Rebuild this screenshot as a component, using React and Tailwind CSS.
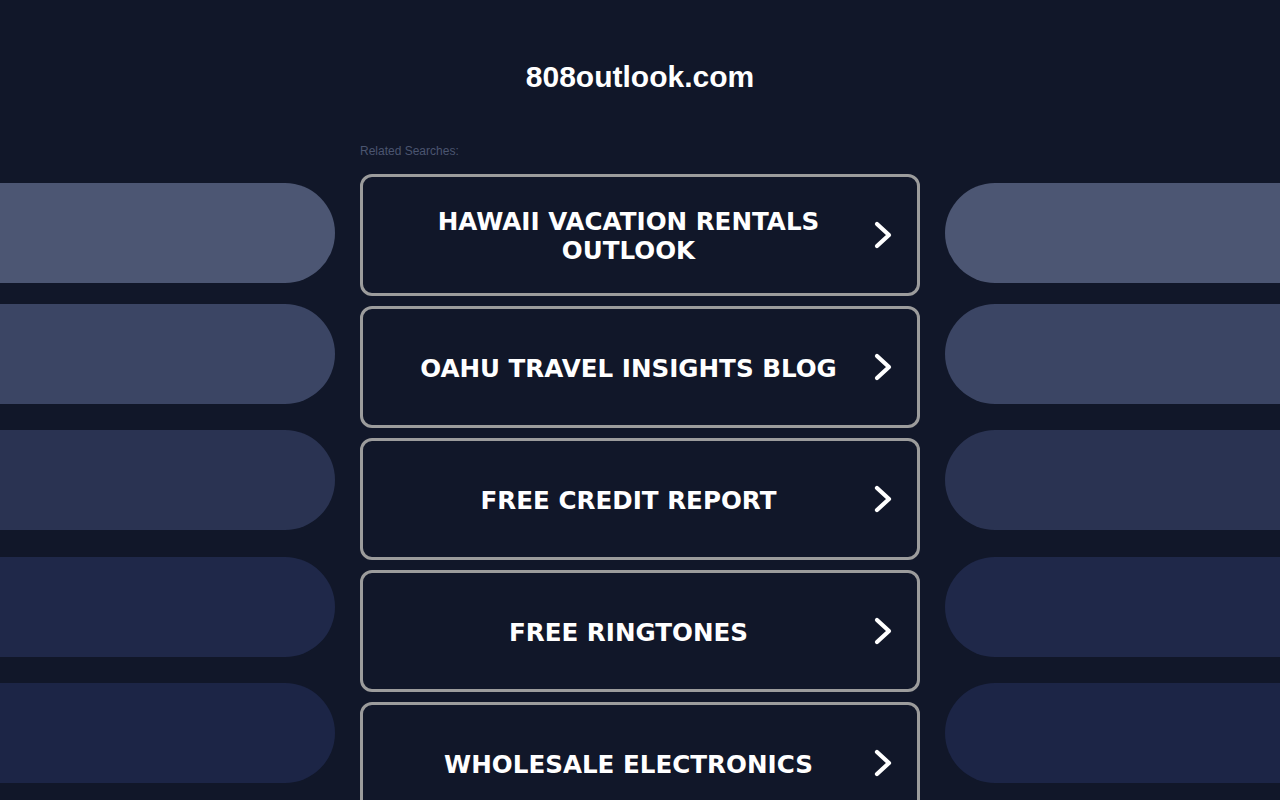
import React from "react";

const items = [
  ["HAWAII VACATION RENTALS", "OUTLOOK"],
  ["OAHU TRAVEL INSIGHTS BLOG"],
  ["FREE CREDIT REPORT"],
  ["FREE RINGTONES"],
  ["WHOLESALE ELECTRONICS"],
];

function Chevron() {
  return (
    <svg width="20" height="30" viewBox="0 0 20 30" className="absolute right-[24px] top-1/2 -translate-y-1/2">
      <polyline points="4,4 16,15 4,26" fill="none" stroke="#ffffff" strokeWidth="4.2" strokeLinecap="round" strokeLinejoin="round" />
    </svg>
  );
}

function Pills({ side }) {
  const round = side === "left" ? "rounded-r-[50px]" : "rounded-l-[50px]";
  return (
    <div className="flex flex-col pt-[183px]">
      <div className={`h-[100px] bg-[#4c5673] ${round}`} />
      <div className={`h-[100px] mt-[21px] bg-[#3b4564] ${round}`} />
      <div className={`h-[100px] mt-[26px] bg-[#2a3352] ${round}`} />
      <div className={`h-[100px] mt-[27px] bg-[#1f2849] ${round}`} />
      <div className={`h-[100px] mt-[26px] bg-[#1c2546] ${round}`} />
    </div>
  );
}

export default function App() {
  return (
    <div className="w-[1280px] h-[800px] overflow-hidden bg-[#111729] flex gap-[25px]">
      <div className="w-[335px] shrink-0">
        <Pills side="left" />
      </div>
      <div className="w-[560px] shrink-0 flex flex-col">
        <h1
          className="mt-[59px] h-[36px] leading-[36px] text-center text-white font-bold text-[30px]"
          style={{ fontFamily: '"Liberation Sans", Arial, sans-serif' }}
        >
          808outlook.com
        </h1>
        <div
          className="mt-[49px] text-[12px] leading-[14px] text-[#4b5570]"
          style={{ fontFamily: '"Liberation Sans", Arial, sans-serif' }}
        >
          Related Searches:
        </div>
        <div className="mt-[16px] flex flex-col gap-[10px]">
          {items.map((lines, i) => (
            <div
              key={i}
              className="relative h-[122px] shrink-0 border-[3px] border-[#9c9c9c] rounded-[12px] bg-[#111729] flex items-center justify-center pl-[17px] pr-[40px]"
            >
              <div
                className="pt-[2px] text-center text-white font-bold text-[24.6px] leading-[29px]"
                style={{ fontFamily: '"DejaVu Sans", Verdana, sans-serif' }}
              >
                {lines.map((l, j) => (
                  <div key={j}>{l}</div>
                ))}
              </div>
              <Chevron />
            </div>
          ))}
        </div>
      </div>
      <div className="w-[335px] shrink-0">
        <Pills side="right" />
      </div>
    </div>
  );
}
